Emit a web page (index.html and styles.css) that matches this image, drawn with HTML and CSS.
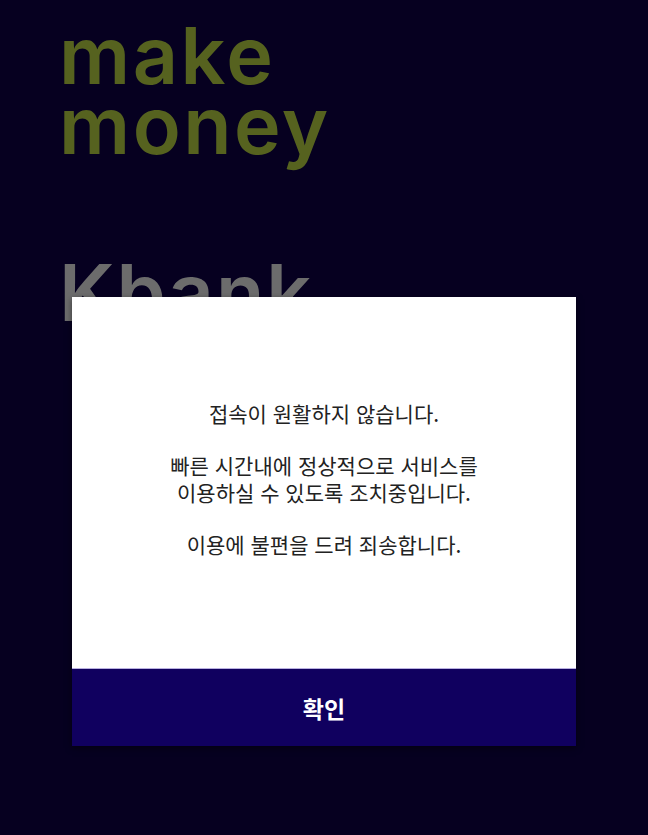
FILE: index.html
```html
<!DOCTYPE html>
<html lang="ko">
<head>
<meta charset="utf-8">
<link rel="stylesheet" href="styles.css">
</head>
<body>
<main class="page">
  <h1 class="slogan"><span class="line">make</span><span class="line">money</span></h1>
  <div class="brand">Kbank</div>
</main>
<div class="overlay">
  <div class="modal">
    <div class="modal-body">
      <p>접속이 원활하지 않습니다.</p>
      <p>빠른 시간내에 정상적으로 서비스를<br>이용하실 수 있도록 조치중입니다.</p>
      <p>이용에 불편을 드려 죄송합니다.</p>
    </div>
    <button class="modal-btn">확인</button>
  </div>
</div>
</body>
</html>
```
FILE: styles.css
```css
html, body {
  margin: 0;
  padding: 0;
  background: #060020;
  height: 835px;
  overflow: hidden;
}
.page {
  padding: 20px 0 0 59px;
  font-family: Inter, "Noto Sans", sans-serif;
}
.slogan {
  margin: 0;
  color: #56621f;
  font-size: 79px;
  font-weight: 600;
  letter-spacing: 2.5px;
}
.slogan .line {
  display: block;
  height: 70px;
  line-height: 70px;
}
.brand {
  margin-top: 92px;
  color: #6c6c6c;
  font-size: 79px;
  line-height: 80px;
  font-weight: 600;
  letter-spacing: 2px;
}
.overlay {
  position: absolute;
  left: 72px;
  top: 297px;
  width: 504px;
}
.modal {
  display: flex;
  flex-direction: column;
  box-shadow: 0 2px 6px rgba(0,0,0,0.5);
}
.modal-body {
  background: #ffffff;
  height: 371px;
  display: flex;
  flex-direction: column;
  justify-content: center;
  align-items: center;
  gap: 26px;
  font-family: "Noto Sans CJK KR", "Noto Sans", sans-serif;
  font-size: 21px;
  line-height: 26.5px;
  color: #222222;
  text-align: center;
  padding-bottom: 8px;
  box-sizing: border-box;
}
.modal-body p {
  margin: 0;
}
.modal-btn {
  border: 0;
  border-top: 1px solid #b9b0e0;
  height: 78px;
  background: #10005f;
  color: #ffffff;
  font-family: "Noto Sans CJK KR", "Noto Sans", sans-serif;
  font-size: 23px;
  font-weight: 700;
  padding: 0;
}
```
